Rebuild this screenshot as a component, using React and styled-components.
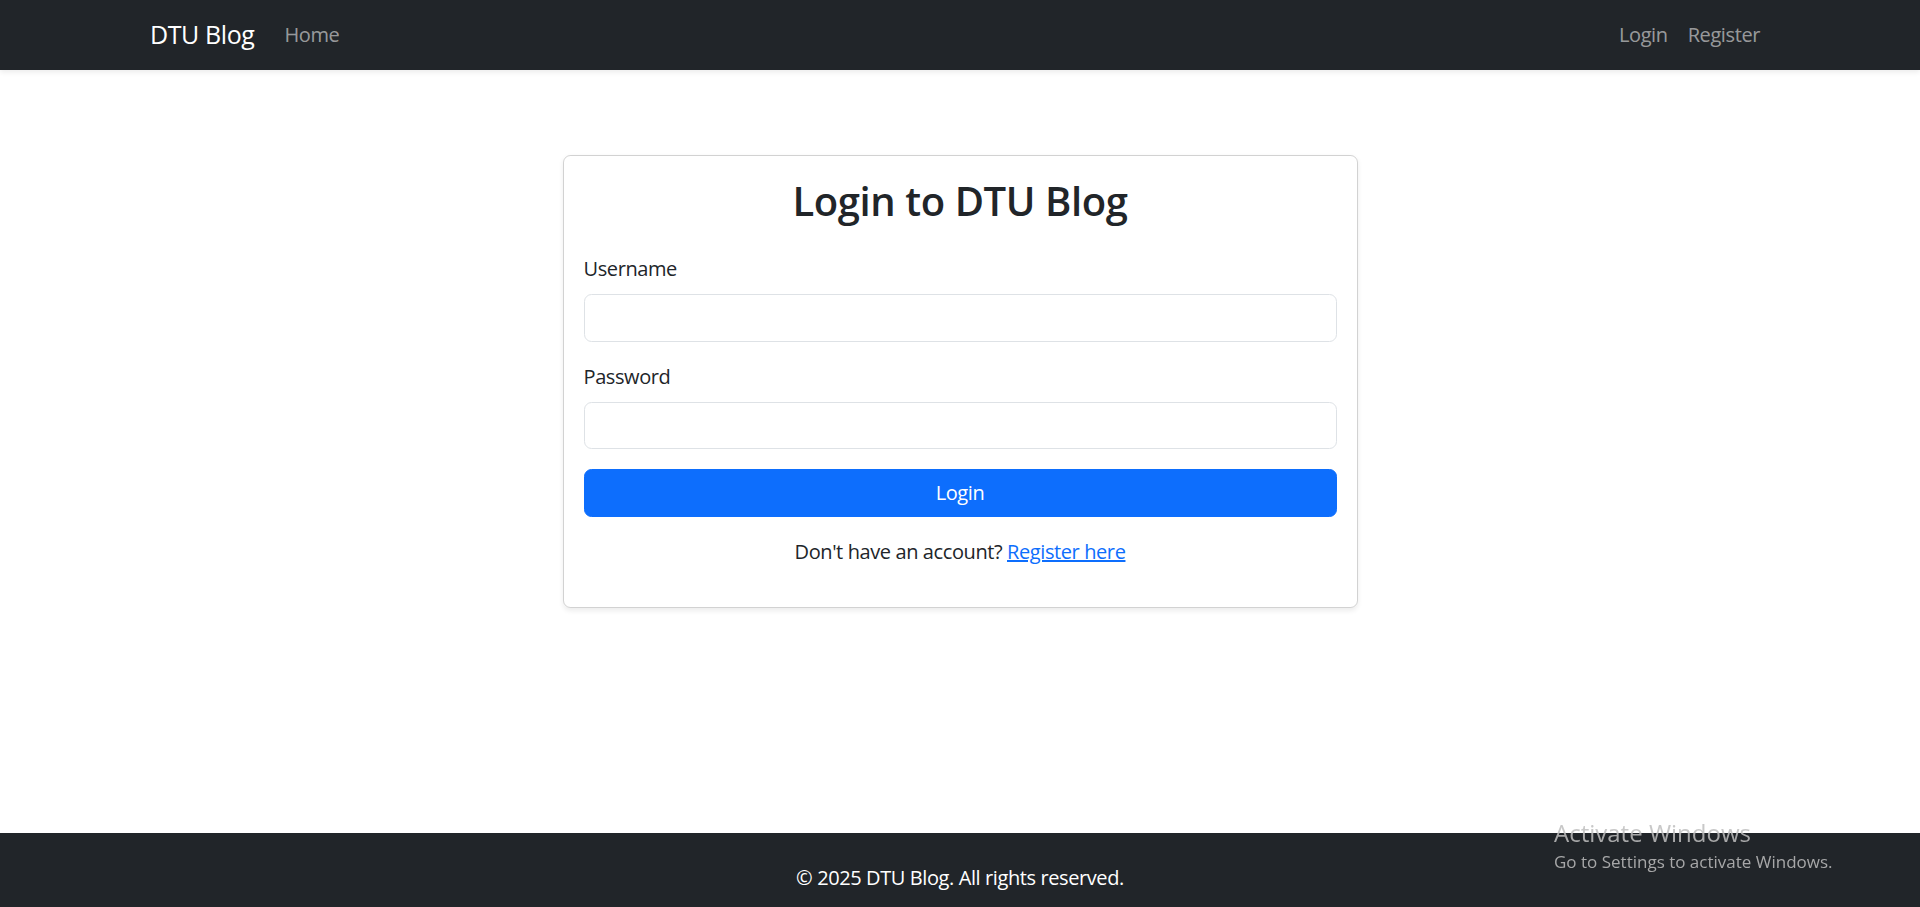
import styled, { createGlobalStyle } from "styled-components";

const GlobalStyle = createGlobalStyle`
  * {
    box-sizing: border-box;
  }
  body {
    margin: 0;
    font-family: "Open Sans", "Noto Sans", sans-serif;
    font-size: 20px;
    line-height: 1.5;
    letter-spacing: -0.02em;
    color: #212529;
    background: #fff;
  }
`;

const Page = styled.div`
  min-height: 100vh;
  display: flex;
  flex-direction: column;
  overflow: hidden;
`;

const Navbar = styled.nav`
  background-color: #212529;
  padding: 10px 0;
  box-shadow: 0 2.5px 5px rgba(0, 0, 0, 0.075);
`;

const NavContainer = styled.div`
  max-width: 1650px;
  margin: 0 auto;
  padding: 0 15px;
  display: flex;
  align-items: center;
`;

const Brand = styled.a`
  color: #fff;
  font-size: 25px;
  line-height: 37.5px;
  padding: 6.25px 0;
  margin-right: 20px;
  text-decoration: none;
`;

const NavLinks = styled.div`
  display: flex;
  align-items: center;
  margin-left: ${(props) => (props.right ? "auto" : "0")};
`;

const NavLink = styled.a`
  color: rgba(255, 255, 255, 0.55);
  font-size: 20px;
  line-height: 30px;
  padding: 10px;
  text-decoration: none;
`;

const Main = styled.main`
  flex: 1;
  display: flex;
  justify-content: center;
  padding-top: 85px;
`;

const Card = styled.div`
  width: 795px;
  align-self: flex-start;
  border: 1.25px solid rgba(0, 0, 0, 0.175);
  border-radius: 7.5px;
  box-shadow: 0 2.5px 5px rgba(0, 0, 0, 0.075);
  padding: 20px;
`;

const Title = styled.h2`
  margin: 0 0 30px;
  padding-top: 2px;
  font-size: 40px;
  line-height: 46px;
  font-weight: 600;
  text-align: center;
`;

const Field = styled.div`
  margin-bottom: 20px;
`;

const Label = styled.label`
  display: block;
  margin-bottom: 10px;
`;

const Input = styled.input`
  display: block;
  width: 100%;
  height: 47.5px;
  padding: 7.5px 15px;
  font: inherit;
  border: 1.25px solid #dee2e6;
  border-radius: 7.5px;
  outline: none;
`;

const Button = styled.button`
  display: block;
  width: 100%;
  height: 47.5px;
  font: inherit;
  letter-spacing: inherit;
  color: #fff;
  background-color: #0d6efd;
  border: 1.25px solid #0d6efd;
  border-radius: 7.5px;
  cursor: pointer;
`;

const Hint = styled.p`
  margin: 20px 0;
  text-align: center;
`;

const Link = styled.a`
  color: #0d6efd;
  text-decoration: underline;
`;

const Footer = styled.footer`
  height: 74px;
  padding-top: 30px;
  background-color: #212529;
  color: #fff;
  text-align: center;
`;

const Watermark = styled.div`
  position: fixed;
  left: 1554px;
  top: 817px;
  color: rgba(190, 190, 190, 0.85);
  font-family: "Open Sans", sans-serif;
  letter-spacing: 0;
  pointer-events: none;
`;

const WatermarkTitle = styled.div`
  font-size: 24px;
  line-height: 32px;
`;

const WatermarkText = styled.div`
  font-size: 17px;
  line-height: 26px;
`;

export default function App() {
  return (
    <>
      <GlobalStyle />
      <Page>
        <Navbar>
          <NavContainer>
            <Brand href="#">DTU Blog</Brand>
            <NavLinks>
              <NavLink href="#">Home</NavLink>
            </NavLinks>
            <NavLinks right>
              <NavLink href="#">Login</NavLink>
              <NavLink href="#">Register</NavLink>
            </NavLinks>
          </NavContainer>
        </Navbar>
        <Main>
          <Card>
            <Title>Login to DTU Blog</Title>
            <Field>
              <Label htmlFor="username">Username</Label>
              <Input id="username" type="text" />
            </Field>
            <Field>
              <Label htmlFor="password">Password</Label>
              <Input id="password" type="password" />
            </Field>
            <Button type="submit">Login</Button>
            <Hint>
              Don't have an account? <Link href="#">Register here</Link>
            </Hint>
          </Card>
        </Main>
        <Footer>© 2025 DTU Blog. All rights reserved.</Footer>
      </Page>
      <Watermark>
        <WatermarkTitle>Activate Windows</WatermarkTitle>
        <WatermarkText>Go to Settings to activate Windows.</WatermarkText>
      </Watermark>
    </>
  );
}
